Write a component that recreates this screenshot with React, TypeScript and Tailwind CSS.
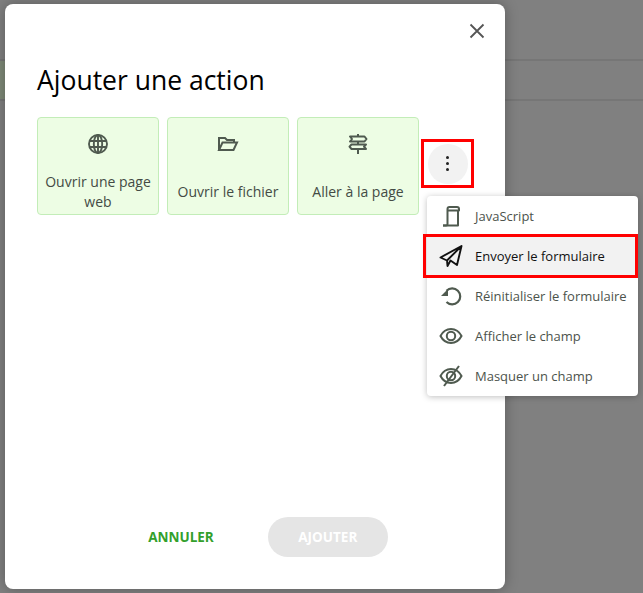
const font = "font-['Open_Sans','Noto_Sans',sans-serif]"

function Globe() {
  return (
    <svg width="22" height="22" viewBox="0 0 22 22" fill="none" stroke="#4f5a4f" strokeWidth="1.9">
      <circle cx="11" cy="11" r="9" />
      <ellipse cx="11" cy="11" rx="4.2" ry="9" />
      <path d="M11 2v18M2.400 8h17.200M2.400 14h17.200" />
    </svg>
  )
}

function Folder() {
  return (
    <svg width="22" height="22" viewBox="0 0 22 22" fill="none" stroke="#4f5a4f" strokeWidth="2">
      <path d="M2 17V5h6l2 2h7v2.500" />
      <path d="M2 17h14.500L20 9.500H5.500z" />
    </svg>
  )
}

function Signpost() {
  return (
    <svg width="22" height="22" viewBox="0 0 22 22" fill="none" stroke="#4f5a4f" strokeWidth="2" strokeLinejoin="round">
      <path d="M11 1v3M11 8.500v3M11 16v5" />
      <path d="M3 3.500h14.500l2 2.500-2 2.500H3l2-2.500z" />
      <path d="M19 11.500H4.500l-2 2.200 2 2.300H19l-2-2.300z" />
    </svg>
  )
}

function Scroll() {
  return (
    <svg width="22" height="22" viewBox="0 0 22 22" fill="none" stroke="#4f5a4f" strokeWidth="2" strokeLinejoin="round">
      <path d="M7.500 4c0-1.400.8-2 2-2h7.500c1.200 0 2 .8 2 2v1.500H7.500" />
      <path d="M7.500 4v15c0 .8-.6 1.500-1.500 1.500H3" />
      <path d="M18 5.500v15H3" />
    </svg>
  )
}

function Send() {
  return (
    <svg width="24" height="24" viewBox="0 0 24 24" fill="none" stroke="#111" strokeWidth="1.900" strokeLinejoin="round">
      <path d="M22.500 2 1.500 13.500l6.500 3L22.500 2 18 21l-6.500-4.500-3 5.500-.5-5.500" />
    </svg>
  )
}

function Reset() {
  return (
    <svg width="22" height="22" viewBox="0 0 22 22" fill="none" stroke="#4f5a4f" strokeWidth="2.200">
      <path d="M6.500 5.800A8 8 0 1 1 6.500 17" />
      <path d="M1 11 8 4v7z" fill="#4f5a4f" stroke="none" />
    </svg>
  )
}

function Eye({ off }: { off?: boolean }) {
  return (
    <svg width="24" height="24" viewBox="0 0 24 24" fill="none" stroke="#4f5a4f" strokeWidth="2">
      <path d="M1.500 12C4 7.200 8 5 12 5s8 2.200 10.500 7C20 16.800 16 19 12 19S4 16.800 1.500 12z" />
      <circle cx="12" cy="12" r="4.200" />
      {off && <path d="M20 2 5 22" />}
    </svg>
  )
}

function ActionCard({ icon, label, pad }: { icon: React.ReactNode; label: string; pad: string }) {
  return (
    <div className="flex h-[98px] w-[122px] flex-col items-center rounded-[4px] border border-[#c3edb8] bg-[#edfde4] pt-[15px]">
      {icon}
      <div className={`${pad} px-1 text-center text-[14px] leading-[20px] text-[#444b44]`}>{label}</div>
    </div>
  )
}

function MenuItem({ icon, label, active }: { icon: React.ReactNode; label: string; active?: boolean }) {
  return (
    <div className={`flex h-10 items-center ${active ? 'bg-[#f2f2f2] text-[#111]' : 'text-[#4c534c]'}`}>
      <div className="flex w-[48px] justify-center">{icon}</div>
      <span className="pt-[2px] text-[13px]">{label}</span>
    </div>
  )
}

export default function App() {
  return (
    <div className={`${font} relative h-[593px] w-[643px] overflow-hidden bg-[#808080]`}>
      {/* page behind the overlay */}
      <div className="mt-[59px] h-[42px] border-y-2 border-[#767676]" />
      <div className="absolute left-0 top-[61px] h-[38px] w-[5px] bg-[#7f8a78]" />

      {/* dialog */}
      <div className="absolute left-[5px] top-[4px] flex h-[585px] w-[500px] flex-col rounded-[8px] bg-white shadow-[0_0_14px_rgba(0,0,0,0.3)]">
        <div className="flex justify-end pr-[20px] pt-[19px]">
          <svg width="16" height="16" viewBox="0 0 16 16" stroke="#555" strokeWidth="1.800">
            <path d="M1.500 1.500 14.500 14.500M14.500 1.500 1.500 14.500" />
          </svg>
        </div>
        <h2 className="mt-[23px] pl-[32px] text-[26.500px] leading-[36px] text-black">Ajouter une action</h2>
        <div className="mt-[19px] flex gap-2 pl-[32px]">
          <ActionCard icon={<Globe />} label="Ouvrir une page web" pad="pt-[17px]" />
          <ActionCard icon={<Folder />} label="Ouvrir le fichier" pad="pt-[27px]" />
          <ActionCard icon={<Signpost />} label="Aller à la page" pad="pt-[27px]" />
        </div>
        <div className="mt-auto mb-[32px] flex items-center justify-center gap-[54px] pl-[26px]">
          <span className="text-[13.500px] font-bold text-[#33a02c]">ANNULER</span>
          <div className="flex h-10 w-[120px] items-center justify-center rounded-[20px] bg-[#e5e5e5] text-[13.500px] font-bold text-white">
            AJOUTER
          </div>
        </div>
      </div>

      {/* more button */}
      <div className="absolute left-[421px] top-[139px] flex h-[49px] w-[53px] items-center justify-center border-[3px] border-[#f00]">
        <div className="flex h-10 w-10 flex-col items-center justify-center gap-[3px] rounded-full bg-[#f2f2f2]">
          <i className="size-[3px] rounded-full bg-[#222]" />
          <i className="size-[3px] rounded-full bg-[#222]" />
          <i className="size-[3px] rounded-full bg-[#222]" />
        </div>
      </div>

      {/* menu */}
      <div className="absolute left-[427px] top-[196px] h-[200px] w-[211px] rounded-[4px] bg-white shadow-[0_1px_6px_rgba(0,0,0,0.25)]">
        <MenuItem icon={<Scroll />} label="JavaScript" />
        <MenuItem icon={<Send />} label="Envoyer le formulaire" active />
        <MenuItem icon={<Reset />} label="Réinitialiser le formulaire" />
        <MenuItem icon={<Eye />} label="Afficher le champ" />
        <MenuItem icon={<Eye off />} label="Masquer un champ" />
      </div>
      <div className="absolute left-[423px] top-[234px] h-[44px] w-[215px] border-[3px] border-[#f00]" />
    </div>
  )
}
